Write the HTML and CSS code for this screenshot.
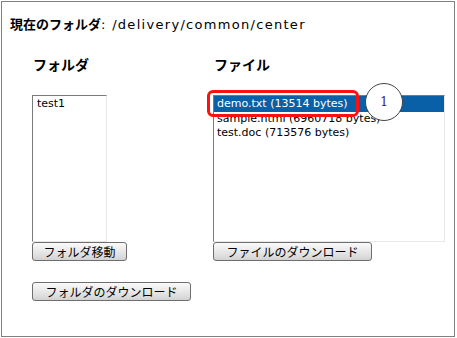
FILE: index.html
```html
<!DOCTYPE html>
<html lang="ja">
<head>
    <meta charset="UTF-8">
    <title>ダウンロード</title>
    <link rel="stylesheet" href="styles.css">
</head>
<body>
    <div class="frame">
        <h1 class="title"><b>現在のフォルダ</b><span class="path">: /delivery/common/center</span></h1>

        <div class="columns">
            <!-- folders -->
            <div class="col">
                <h2 class="label">フォルダ</h2>
                <div class="listbox folders">
                    <div class="row">test1</div>
                </div>
                <button class="btn btn-move">フォルダ移動</button>
                <button class="btn btn-wide btn-folder-dl">フォルダのダウンロード</button>
            </div>

            <!-- files -->
            <div class="col">
                <h2 class="label">ファイル</h2>
                <div class="listbox files">
                    <div class="row selected">demo.txt (13514 bytes)</div>
                    <div class="row">sample.html (6960718 bytes)</div>
                    <div class="row">test.doc (713576 bytes)</div>
                    <div class="callout-box"></div>
                    <div class="callout-num">1</div>
                </div>
                <button class="btn btn-wide">ファイルのダウンロード</button>
            </div>
        </div>
    </div>
</body>
</html>
```

FILE: styles.css
```css
body {
    margin: 1px;
    font-family: "Noto Sans CJK JP", "Liberation Sans", sans-serif;
    color: #000;
    background: #fff;
}

.frame {
    width: 452px;
    height: 334px;
    border: 1px solid #808080;
    box-sizing: content-box;
}

.title {
    margin: 0;
    padding: 13px 0 0 8px;
    font-size: 13px;
    line-height: 18px;
    font-weight: normal;
}

.title b {
    font-weight: bold;
}

.path {
    font-family: "DejaVu Sans", sans-serif;
    font-size: 13px;
    letter-spacing: 1.3px;
}

.columns {
    display: grid;
    grid-template-columns: 181px 1fr;
    padding-left: 30px;
}

.col {
    display: flex;
    flex-direction: column;
    align-items: flex-start;
}

.label {
    margin: 0;
    padding: 20px 0 0 1px;
    font-size: 14px;
    line-height: 20px;
    font-weight: bold;
    height: 61px;
    box-sizing: border-box;
}

.listbox {
    position: relative;
    height: 147px;
    box-sizing: border-box;
    border-top: 1px solid #7a7a7a;
    border-left: 1px solid #7a7a7a;
    border-right: 1px solid #e8e8e8;
    border-bottom: 1px solid #e8e8e8;
    padding: 1px 0 0 2px;
    font-family: "DejaVu Sans", sans-serif;
    font-size: 11px;
}

.folders {
    width: 75px;
}

.files {
    width: 232px;
    padding-left: 0;
    padding-top: 0;
}

.row {
    line-height: 14px;
    padding-left: 2px;
    white-space: nowrap;
}

.files .row {
    padding-left: 3px;
}

.row.selected {
    background: #0a60a6;
    color: #fff;
    line-height: 16px;
}

.callout-box {
    position: absolute;
    left: -7px;
    top: -6px;
    width: 146px;
    height: 21px;
    border: 3px solid #ff1010;
    border-radius: 6px;
}

.callout-num {
    position: absolute;
    left: 151px;
    top: -13px;
    width: 36px;
    height: 36px;
    border: 1px solid #444;
    border-radius: 50%;
    background: #fff;
    color: #3c1490;
    font-family: "DejaVu Serif", serif;
    font-size: 12px;
    line-height: 36px;
    text-align: center;
}

.btn {
    height: 19px;
    padding: 0;
    border: 1px solid #6e6e6e;
    border-radius: 3px;
    background: linear-gradient(#fafafa, #e4e4e4 60%, #d2d2d2);
    font-family: "Noto Sans CJK JP", sans-serif;
    font-size: 12px;
    line-height: 16px;
    color: #000;
}

.btn-move {
    width: 95px;
}

.btn-wide {
    width: 159px;
}

.btn-folder-dl {
    margin-top: 21px;
}
```
